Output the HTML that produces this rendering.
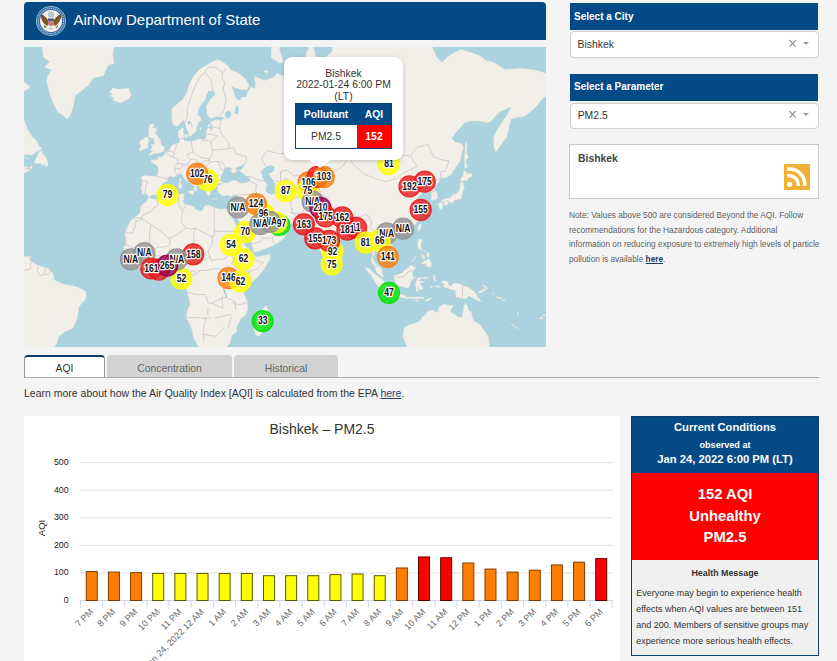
<!DOCTYPE html>
<html><head><meta charset="utf-8">
<style>
*{box-sizing:border-box;margin:0;padding:0}
html,body{width:837px;height:661px;overflow:hidden;background:#f4f4f4;font-family:"Liberation Sans",sans-serif;color:#333}
.a{position:absolute}
.t{position:absolute;white-space:nowrap;line-height:1}
.c{transform:translateX(-50%)}
.b{font-weight:bold}
</style></head><body>
<!-- header -->
<div class="a" style="left:24px;top:2px;width:522px;height:38px;background:#044a87;border-radius:4px 4px 0 0"></div>
<svg class="a" style="left:35px;top:5px" width="32" height="32" viewBox="0 0 32 32">
<circle cx="16" cy="16" r="15" fill="#8dbfc2"/>
<circle cx="16" cy="16" r="14.1" fill="#3b69a6"/>
<circle cx="16" cy="16" r="12.6" fill="none" stroke="#a9c3dc" stroke-width="1.2" stroke-dasharray="1.2 0.9"/>
<circle cx="16" cy="16" r="11" fill="#f6f3ec"/>
<circle cx="16" cy="9.5" r="3.2" fill="#b8c9d8"/>
<path d="M5.5 9.5 Q8 9 11 12.5 L14 16.5 L12.5 21 Q8 19 6.5 14 Z" fill="#7d5226"/>
<path d="M26.5 9.5 Q24 9 21 12.5 L18 16.5 L19.5 21 Q24 19 25.5 14 Z" fill="#7d5226"/>
<path d="M13 14.5 h6 v5 q-3 3.5 -6 0 Z" fill="#c87c7c"/>
<rect x="13" y="13.5" width="6" height="2.2" fill="#34589a"/>
<path d="M8.5 19.5 L12 22 L9.5 23 Z" fill="#5f7d3d"/>
<path d="M23.5 19.5 L20 22 L22.5 23 Z" fill="#9a8a6a"/>
<ellipse cx="16" cy="23.5" rx="2.5" ry="1.5" fill="#d8d0c0"/>
</svg>
<div class="t" style="left:73.5px;top:12.3px;font-size:15px;color:#fff">AirNow Department of State</div>

<!-- map -->
<div class="a" style="left:24px;top:47px;width:522px;height:300px;overflow:hidden;background:#aad3df">
<svg width="522" height="300" viewBox="0 0 522 300" style="position:absolute;left:0;top:0;display:block">
<rect width="522" height="300" fill="#aad3df"/>
<path d="M124.9,149.9L123.4,147.8L121.1,146.7L117.9,147.2L118.1,143.2L116.6,142.4L117.9,138.5L118.1,133.4L117.0,130.5L119.8,128.4L126.2,129.0L133.1,129.3L134.3,125.4L134.3,120.9L131.6,117.4L127.3,115.5L126.9,113.6L130.5,112.6L133.5,113.0L133.9,109.7L137.3,110.3L140.3,108.0L142.2,105.0L144.4,104.0L146.5,101.2L147.6,98.4L151.4,96.6L154.0,96.2L155.5,95.2L155.3,91.1L154.2,88.9L154.4,84.2L157.9,81.1L159.6,80.7L158.9,85.4L160.2,86.2L158.3,91.1L160.2,93.3L162.6,94.1L166.8,94.8L172.2,93.0L176.5,91.8L178.6,93.3L182.2,91.1L182.0,85.4L183.1,81.9L185.2,80.7L188.0,83.5L188.9,79.9L187.1,77.0L186.9,74.6L191.4,72.9L196.8,73.3L201.5,71.6L198.9,70.3L193.6,69.5L186.1,71.6L182.7,67.7L182.9,63.7L182.2,59.6L185.0,53.9L189.3,49.0L191.2,47.5L189.9,43.9L184.6,43.9L182.4,48.5L180.7,53.9L176.5,58.2L173.9,63.7L173.7,68.1L176.7,70.3L177.3,73.3L174.5,75.8L172.6,79.9L172.0,85.0L169.0,86.6L167.5,89.2L164.5,89.6L164.3,85.0L162.1,80.3L160.8,75.8L159.3,73.3L156.8,75.4L154.0,79.1L151.0,79.1L148.9,76.6L148.0,72.9L147.6,66.8L148.0,61.4L151.4,58.7L154.6,55.8L158.3,52.9L161.5,48.0L163.6,42.8L165.8,35.8L169.0,30.1L172.2,26.0L175.4,22.4L179.7,19.9L185.0,16.7L192.1,12.8L196.8,13.5L203.2,18.0L207.5,23.6L213.9,25.4L222.4,33.0L225.0,38.5L223.5,42.8L218.1,42.8L210.7,40.7L207.5,39.1L211.7,51.0L215.6,53.4L218.1,50.0L222.4,50.0L223.5,45.4L226.7,40.1L231.0,41.7L231.4,37.4L230.5,29.5L235.2,31.3L240.6,33.6L250.2,30.1L252.4,26.6L258.8,28.4L263.0,30.1L266.2,25.4L273.7,24.2L280.1,27.8L283.4,31.3L284.4,26.6L280.1,19.9L280.6,12.2L283.4,3.3L285.5,-1.8L289.8,1.1L291.9,10.2L290.8,16.7L294.0,24.8L293.0,31.9L296.2,34.7L301.5,30.7L305.8,31.9L301.5,10.2L307.9,4.7L309.7,-4.1L320.8,-7.9L322.9,-15.9L329.3,-24.4L350.7,-33.6L361.4,-43.5L380.6,-7.9L393.5,-4.1L407.4,-2.6L412.7,10.2L417.8,15.5L423.4,10.2L431.9,4.7L437.1,2.5L446.9,5.4L456.1,8.8L461.9,13.5L470.2,15.5L480.7,22.4L489.7,21.8L498.0,21.2L511.0,23.0L521.7,26.0L532.4,37.4L532.4,48.0L521.7,49.5L518.5,51.9L512.3,59.6L505.7,65.5L499.5,69.7L491.8,70.7L486.9,72.0L485.4,78.3L484.3,83.8L482.6,91.1L479.0,94.8L475.6,100.1L471.7,105.3L470.4,101.9L469.6,96.6L470.0,89.2L472.6,83.5L476.4,77.9L479.2,73.3L483.3,67.7L486.9,60.5L484.3,61.0L475.6,65.1L470.4,70.3L466.6,75.0L461.9,75.4L455.5,74.1L446.9,74.1L440.5,75.4L437.3,79.5L431.9,85.4L427.7,91.1L430.9,94.8L437.3,96.6L439.4,100.1L437.3,108.7L436.6,113.6L431.9,119.9L426.6,128.1L421.3,131.1L418.0,130.5L415.9,132.5L414.0,136.2L410.6,139.0L409.5,140.4L413.1,145.9L413.8,149.9L413.1,152.0L409.5,153.3L406.9,153.6L407.4,149.9L407.8,145.1L404.8,145.1L403.5,139.9L398.8,137.9L396.0,142.4L398.4,139.0L396.7,136.5L393.5,138.2L391.7,141.0L389.2,141.3L388.3,142.9L390.9,145.9L391.7,146.7L395.0,145.1L398.8,146.4L395.6,148.6L392.4,152.5L394.5,156.4L396.7,160.2L397.5,163.0L396.7,164.5L397.7,166.4L396.7,168.9L394.5,172.0L392.4,176.1L390.3,178.4L387.0,180.8L381.7,183.1L379.6,183.8L374.2,185.4L372.5,188.2L371.4,185.4L368.9,185.0L365.0,187.5L363.1,191.1L364.6,194.5L367.8,197.8L369.9,203.4L370.4,207.3L366.7,209.9L365.0,212.1L361.4,214.0L361.6,211.0L360.3,210.1L357.1,208.0L355.6,206.2L352.8,205.3L350.7,203.6L350.7,206.0L349.0,210.4L349.6,213.2L351.3,214.5L351.8,217.1L353.9,217.9L356.0,219.6L358.0,222.9L358.2,226.7L359.7,229.5L358.2,229.7L353.5,226.5L351.6,223.1L351.3,220.7L350.1,218.6L347.3,215.6L347.3,212.1L347.9,208.8L347.5,204.5L345.8,196.7L344.7,195.8L343.2,196.7L340.9,198.5L338.5,197.8L338.9,192.9L336.8,190.0L334.7,186.6L333.6,184.3L332.5,182.4L330.4,184.3L327.2,185.0L322.9,185.4L322.7,187.7L318.6,190.4L315.4,193.4L312.6,196.5L308.6,198.9L308.4,203.4L307.5,207.7L306.4,210.4L304.7,213.2L302.6,215.1L300.5,213.4L298.7,208.2L296.8,204.7L295.3,200.5L293.8,196.7L292.5,191.1L292.8,186.1L291.9,184.7L288.3,187.0L284.4,183.3L287.4,182.2L283.4,180.8L281.0,179.6L279.3,176.3L274.8,176.8L268.4,177.0L262.6,176.1L259.4,175.4L257.5,172.3L253.8,173.7L249.4,171.8L247.0,170.3L244.0,165.5L240.8,165.5L239.3,166.4L240.6,169.6L242.3,172.5L244.2,174.4L245.1,177.3L247.2,175.4L247.2,179.1L251.3,179.4L255.6,176.3L257.3,174.2L258.3,179.1L262.4,180.6L264.8,183.3L262.0,187.5L260.3,191.1L257.9,192.9L254.5,195.6L248.5,198.7L241.7,201.6L234.2,204.5L229.9,205.1L228.4,200.5L227.8,196.7L224.6,190.0L220.5,185.4L219.2,180.1L216.0,176.1L212.4,170.1L211.5,166.4L210.2,170.8L206.6,165.5L207.5,168.2L208.7,171.8L212.8,179.6L215.8,184.3L216.9,191.6L219.4,194.5L221.4,198.9L225.0,202.3L228.0,205.1L229.5,206.9L232.0,210.1L235.2,209.5L239.5,208.4L243.8,207.7L246.6,207.1L246.2,209.9L245.5,213.2L242.7,217.9L239.5,222.9L235.2,228.2L229.9,233.6L225.6,236.8L222.6,239.6L220.7,242.6L219.9,246.4L221.4,249.7L223.3,255.1L223.7,262.7L221.4,268.3L217.1,271.4L212.8,279.6L212.8,284.9L207.5,288.9L207.0,291.3L206.2,296.1L203.8,298.6L201.0,303.5L190.3,311.2L175.4,311.2L174.3,299.8L172.2,296.1L169.6,291.3L167.9,283.1L165.8,277.3L162.1,270.5L163.0,263.8L166.0,258.3L165.1,251.8L163.2,245.4L162.1,241.1L157.2,236.8L156.8,231.4L157.6,226.1L156.1,223.9L155.1,222.7L151.9,223.1L149.5,223.3L147.6,220.5L146.1,218.8L142.7,218.8L139.0,219.9L132.6,222.2L128.3,221.4L120.9,223.1L117.2,221.8L112.3,217.7L108.7,214.7L108.5,212.1L104.8,209.3L101.2,205.8L99.5,200.7L101.6,197.8L102.1,191.1L100.6,186.6L102.7,181.9L105.9,174.9L109.1,171.1L115.5,166.9L116.2,164.0L117.0,159.0L119.8,156.2L122.4,154.9L124.3,150.4L125.6,150.2L128.3,152.0L132.6,152.3L136.9,150.4L143.3,147.8L149.7,147.2L155.3,147.5L158.7,146.4L160.6,147.2L159.3,149.9L160.4,152.0L158.5,154.6L160.6,156.9L164.7,157.9L169.6,159.5L170.7,161.7L176.5,164.5L179.4,163.0L179.9,159.5L182.9,157.9L186.3,158.7L190.3,160.7L196.3,162.2L200.8,162.0L204.2,161.5L206.0,162.2L210.2,162.0L211.5,159.0L212.8,155.4L213.7,151.2L214.1,147.8L210.7,147.8L206.4,149.6L202.3,148.0L200.0,149.4L196.8,147.8L195.1,145.9L193.3,143.2L194.0,140.7L192.9,139.0L195.7,137.9L199.1,135.9L204.2,135.7L208.5,133.4L212.2,133.4L216.0,135.9L220.3,135.9L225.8,134.5L226.1,131.9L222.4,129.3L218.1,126.0L215.4,123.9L218.6,121.5L220.7,117.7L218.6,118.1L212.8,120.2L211.3,122.1L212.8,123.6L214.9,123.3L212.8,124.5L210.0,126.3L208.3,125.7L206.4,123.3L209.0,121.5L205.1,120.2L202.5,119.9L200.2,123.3L198.0,126.9L196.6,129.9L196.8,133.4L198.9,135.7L195.7,136.5L192.5,137.1L189.3,136.5L187.8,138.2L185.2,137.6L186.1,141.0L188.2,144.0L186.1,144.8L186.5,147.2L185.0,148.8L183.1,147.8L182.4,145.1L180.9,141.3L178.4,137.6L178.6,134.0L176.5,131.9L173.2,129.6L170.9,128.7L169.4,126.9L167.9,123.6L166.2,122.7L163.4,123.3L163.2,126.9L166.0,129.0L168.8,133.4L171.3,135.1L175.4,137.4L176.5,138.8L173.2,137.6L172.2,139.9L173.5,142.1L171.3,144.5L170.5,144.0L170.5,139.0L167.9,137.4L166.2,135.7L163.2,134.2L160.8,132.2L159.3,130.5L158.7,127.8L155.7,126.3L152.9,128.1L149.7,130.2L146.7,129.3L143.5,130.5L143.7,133.7L139.0,136.2L136.9,140.2L136.3,141.8L137.3,142.6L135.4,145.6L132.4,148.0L127.5,148.0ZM-1.0,109.0L5.0,111.7L3.9,112.0L-0.4,109.7ZM378.5,290.1L380.2,280.7L386.0,277.5L391.3,276.2L396.7,273.2L398.2,269.8L401.2,268.1L404.1,264.1L409.1,262.7L411.2,265.6L414.0,264.7L415.1,260.3L417.0,258.8L420.4,257.0L422.3,257.9L427.7,258.3L429.6,259.0L427.5,261.4L426.4,264.9L431.3,267.8L434.7,270.3L437.9,270.5L439.4,264.9L439.6,259.7L441.6,255.5L443.7,259.4L444.3,263.4L447.6,264.7L448.0,268.9L449.7,273.7L455.0,276.8L459.3,282.1L464.2,288.9L465.3,296.1L464.4,304.8L461.9,315.1L382.8,315.1L382.6,298.6L379.6,291.3ZM-55.5,-7.9L-34.1,-4.1L-23.4,3.3L-17.0,10.2L-8.5,18.0L-6.3,24.8L-5.3,30.1L1.1,35.8L5.8,39.6L3.3,42.8L-1.6,44.9L-3.8,49.0L-1.0,51.5L-1.6,55.3L0.1,58.2L-3.1,60.1L-9.6,61.0L-17.0,60.1L-29.9,60.1L-55.5,48.0ZM381.7,250.1L391.3,250.1L399.9,250.1L399.9,251.4L391.3,251.8L381.7,251.4ZM369.9,228.7L371.2,228.2L375.3,226.9L378.5,225.7L380.6,222.9L383.8,221.2L386.6,217.7L388.5,218.8L392.0,221.2L389.2,223.3L388.3,226.1L389.2,230.4L391.3,230.6L388.1,232.5L387.0,234.6L386.0,237.8L384.9,240.6L381.7,241.1L378.5,239.3L374.2,239.1L372.1,236.8L370.6,233.6ZM406.1,239.1L408.9,239.3L408.2,240.6L406.3,240.4ZM155.3,135.1L155.3,132.5L157.0,130.5L157.2,133.4L156.6,135.1ZM187.1,151.7L193.1,151.7L192.7,152.5L187.4,152.0ZM206.0,153.3L209.6,152.5L210.9,150.7L206.4,152.3ZM516.0,270.5L518.7,270.1L518.5,272.1L516.2,271.9ZM519.2,267.8L521.7,267.6L521.3,268.9L518.7,268.9ZM157.6,89.2L159.3,88.9L160.2,90.4L158.9,91.1L157.9,90.4ZM124.7,108.4L127.9,107.4L130.5,106.3L134.8,106.0L139.9,104.6L140.5,99.8L137.5,98.4L136.9,96.6L136.3,93.0L133.7,89.2L132.6,87.3L130.5,87.3L131.6,85.4L133.1,81.5L130.5,80.7L128.3,81.1L130.1,77.0L126.2,77.0L124.5,81.5L124.9,86.2L123.9,89.2L126.4,91.1L130.1,91.5L129.8,93.7L130.7,95.2L130.3,97.3L127.1,97.3L128.1,99.1L127.7,101.9L126.0,102.6L127.3,103.3L130.3,104.0L127.9,104.6ZM175.6,82.3L176.9,79.9L177.5,81.1L176.5,83.8ZM43.0,72.2L46.0,69.0L49.2,60.1L51.4,48.5L56.7,44.4L64.2,38.5L69.6,30.7L79.2,29.0L84.5,18.0L89.9,16.7L88.8,6.8L90.9,-4.1L94.1,-24.4L72.8,-65.9L8.6,-65.9L-4.2,-33.6L12.9,-20.1L17.2,-4.1L18.2,1.1L19.3,10.2L25.7,14.8L20.4,19.9L27.9,23.0L23.6,29.0L22.5,34.7L24.7,42.8L26.8,50.5L30.0,57.7L33.2,64.6L38.6,68.1ZM369.1,190.7L373.1,188.6L374.2,189.8L372.1,192.7L369.3,192.2ZM409.5,227.8L411.6,229.3L410.6,231.4L412.5,233.6L410.6,234.2L409.5,231.4ZM436.2,134.8L437.3,129.9L439.2,129.6L439.9,123.3L443.1,126.6L447.6,126.6L448.6,129.3L444.8,130.8L443.3,133.4L438.4,134.0ZM416.8,155.1L418.9,152.8L422.3,151.2L426.0,150.7L427.7,149.4L429.4,146.4L430.4,147.8L432.6,146.4L434.9,144.0L436.0,140.4L436.2,137.4L436.9,135.7L439.2,135.1L439.4,137.6L440.5,140.4L439.4,143.7L438.4,144.5L438.1,147.2L437.5,149.9L437.9,150.7L436.0,152.5L434.3,152.0L433.0,153.3L430.9,153.3L429.6,154.3L427.7,156.4L425.7,154.6L423.4,153.6L420.2,154.6ZM85.6,45.4L88.8,40.7L94.1,42.3L99.5,41.7L104.8,41.2L105.9,45.4L107.8,47.5L105.0,51.5L100.6,53.9L96.3,55.8L90.9,53.9L88.4,53.4L89.9,50.5L85.6,49.0L88.8,46.9ZM124.1,101.2L123.9,97.0L125.1,93.7L124.1,90.4L121.1,90.0L118.7,92.6L115.5,94.1L115.9,97.0L117.0,99.8L114.7,102.2L115.9,103.8L119.2,102.6L123.2,101.2ZM361.8,247.1L363.5,245.4L368.4,246.0L373.1,247.3L377.9,247.3L381.9,249.0L381.5,251.2L374.2,250.1L367.8,249.2L362.5,247.3ZM240.0,24.8L242.7,26.6L244.4,24.2L241.7,23.0ZM415.3,156.2L417.0,155.4L419.1,156.9L418.0,161.7L416.3,162.7L415.3,161.7L414.8,158.4L414.0,156.9ZM394.7,192.2L398.2,192.2L397.7,195.6L396.9,198.3L397.7,202.3L402.0,204.5L401.8,205.3L398.8,203.1L396.7,202.7L394.7,201.8L393.5,197.8L394.1,194.5ZM242.3,258.3L244.9,266.1L243.4,269.4L239.5,280.7L237.4,287.3L233.5,289.2L231.0,286.6L229.5,280.7L231.8,276.2L231.0,269.4L235.2,266.7L239.3,261.6ZM397.7,217.5L398.2,215.3L401.4,213.8L405.0,211.4L407.6,216.4L406.7,219.2L405.0,220.5L402.4,219.2L401.2,216.2ZM398.6,208.8L400.9,209.1L400.3,213.0L398.8,211.4ZM454.4,244.3L458.7,243.2L460.8,241.5L462.3,242.1L459.7,244.3L457.6,245.8L454.4,245.4ZM487.5,276.6L494.4,281.7L493.7,282.1L487.3,277.3ZM17.8,103.3L18.2,106.3L21.9,110.3L24.2,116.2L23.4,119.6L21.0,119.0L20.6,116.8L18.0,118.7L16.7,116.5L10.1,116.5L12.0,111.7L14.2,106.3ZM417.0,235.3L419.1,233.4L423.4,234.4L425.5,239.6L430.9,235.7L437.3,237.6L444.8,240.6L448.6,243.2L452.3,246.4L453.3,250.1L457.6,254.6L455.0,254.6L450.1,251.4L444.8,249.0L443.3,251.0L438.4,252.0L434.1,249.9L431.9,250.3L431.5,243.6L425.5,241.9L422.5,240.8L420.8,241.1L419.1,238.5L421.3,237.4L417.6,235.7ZM458.7,237.8L461.9,239.3L464.0,242.1L463.2,242.6L460.8,240.2L458.2,238.5ZM-55.5,108.7L-27.7,61.0L-17.0,64.6L-11.7,74.6L-6.3,77.9L-3.1,73.3L-0.8,69.5L1.1,75.4L3.3,81.5L5.8,85.4L8.6,90.0L12.9,94.1L14.6,98.4L17.8,101.2L15.2,103.6L11.8,105.3L8.6,108.0L2.2,107.7L-5.3,108.4L-5.3,111.3L-0.4,112.6L-3.1,115.2L-1.6,116.8L-1.2,120.6L0.5,121.2L3.3,122.4L5.8,122.7L8.2,120.9L7.6,118.4L5.4,120.6L6.3,123.6L1.1,125.7L-3.1,129.0L-4.6,126.6L-1.0,123.6L-4.2,123.9L-6.8,125.4L-12.8,129.0L-12.8,139.0L-76.9,139.0ZM247.0,10.2L255.6,16.1L259.8,15.5L255.6,3.3L256.6,-7.9L265.2,-24.4L248.1,-24.4ZM387.5,214.7L392.6,208.0L393.0,208.8L388.3,214.9ZM397.7,207.1L400.1,208.0L399.4,209.9L397.5,209.7ZM-0.8,119.6L4.3,119.9L3.3,121.5L0.1,120.9ZM183.5,78.3L185.2,77.0L186.7,77.4L185.6,79.7L183.9,79.5ZM440.3,121.5L440.9,119.0L440.3,113.6L440.9,105.3L441.6,96.6L442.6,94.1L443.1,98.4L442.6,105.3L444.8,111.3L443.1,111.0L441.6,115.2L443.5,119.9L440.9,121.5ZM402.4,205.6L405.9,206.2L405.4,208.8L403.9,211.0L402.7,208.2ZM154.9,141.8L154.4,136.5L156.6,135.7L157.9,137.6L157.4,141.5L156.1,141.8ZM410.6,238.7L416.6,239.1L415.9,240.4L411.0,240.0ZM419.1,155.6L422.3,154.3L424.7,154.6L423.8,157.2L421.3,158.4L420.2,157.2ZM163.4,145.1L165.5,144.0L170.3,143.7L169.2,146.4L169.2,148.0L167.5,147.2L163.8,145.6ZM468.3,245.4L470.4,247.3L469.4,247.5L467.9,246.0ZM472.6,249.7L477.9,250.7L476.8,251.8L472.6,250.7ZM477.9,252.5L480.7,253.6L480.0,254.0L478.1,253.6ZM480.0,250.7L482.2,252.9L481.5,253.3L479.8,251.4ZM-12.8,206.7L0.1,209.5L4.3,209.5L4.8,210.6L6.9,214.3L10.8,216.4L12.9,217.9L19.3,219.9L24.7,221.8L27.9,225.0L30.0,229.3L30.0,232.5L33.2,234.6L41.8,237.8L49.2,238.7L54.6,240.4L61.6,244.1L62.5,248.6L61.0,252.9L57.8,256.2L54.6,260.5L53.5,270.5L51.4,276.2L49.2,280.7L45.0,283.1L40.7,284.7L34.3,290.1L33.0,296.1L30.0,301.0L23.6,309.9L-12.8,309.9ZM307.7,211.4L310.1,214.3L312.0,216.4L311.4,218.8L309.2,219.9L307.9,217.7L307.5,214.9ZM392.4,244.3L392.2,240.0L390.9,238.5L393.0,232.5L393.9,230.6L402.0,230.4L404.6,229.3L403.1,231.6L396.7,231.4L394.7,233.8L400.7,234.4L396.2,236.3L399.4,242.1L395.6,242.8L394.3,238.5L394.3,244.5ZM340.7,220.5L345.4,221.4L347.9,224.4L351.8,227.8L353.9,228.9L358.2,232.5L360.1,235.1L363.5,238.9L363.1,244.9L360.5,245.1L355.6,241.1L352.8,237.8L350.1,233.6L347.7,228.9L344.3,225.2ZM391.3,252.9L395.2,253.8L393.5,254.6L391.3,253.6ZM395.6,177.3L397.7,177.3L397.5,179.6L395.6,183.1L395.2,184.5L393.9,182.9L393.7,180.8ZM402.0,252.5L409.1,250.3L404.1,254.0L400.9,254.6ZM4.6,209.3L6.5,209.3L6.5,210.8L4.6,210.8ZM493.1,264.9L494.6,266.1L493.9,268.3L493.1,267.2ZM262.0,19.3L266.2,21.2L265.8,16.7L262.6,17.4ZM160.4,88.5L163.0,86.9L163.8,88.9L162.8,91.1L160.8,90.4Z" fill="#f2efe9" stroke="#e4ddd0" stroke-width="0.4"/>
<path d="M238.5,122.7L241.7,120.2L245.9,118.4L250.2,119.3L250.6,123.6L246.6,126.0L244.4,126.6L246.6,129.9L249.6,133.4L250.0,135.7L252.4,136.8L250.2,139.0L251.3,141.0L252.1,146.4L247.0,147.8L243.8,146.2L241.7,143.7L242.5,138.5L244.4,137.9L242.7,137.4L240.8,134.0L238.5,130.5L238.5,127.5L236.7,125.7ZM200.6,67.7L202.3,65.1L204.2,63.3L207.0,65.5L207.2,68.6L204.9,71.4L202.1,70.7ZM210.2,65.9L211.9,60.1L213.4,58.2L214.9,61.9L213.9,66.8L212.4,67.3ZM163.4,75.8L164.7,73.7L167.3,74.6L165.8,77.0L164.1,77.4ZM167.0,76.2L167.9,75.8L168.8,79.9L167.7,80.3ZM204.9,234.6L207.5,232.7L209.8,233.4L209.6,236.3L207.2,238.1L204.7,236.8ZM199.3,239.8L200.2,239.6L203.2,249.7L202.3,251.0L200.8,247.5L199.5,243.2ZM210.2,253.1L210.9,252.9L212.2,260.5L212.4,263.6L211.5,263.4L210.7,257.3ZM294.0,119.9L295.8,118.7L299.4,119.9L303.7,119.0L306.2,120.2L304.7,120.6L300.5,121.8L296.2,121.5ZM358.8,103.3L360.5,103.6L365.2,99.8L368.2,96.6L371.0,89.2L370.6,88.1L368.4,92.6L364.6,97.7L361.4,101.9Z" fill="#aad3df"/>
<path d="M133.1,152.3L133.3,155.1L134.3,158.7L129.2,161.2L129.0,163.0L125.1,165.5L118.3,168.4M118.3,170.8L108.7,170.8M118.3,168.4L118.3,171.8L126.6,177.3M118.3,171.8L111.2,174.9L111.2,180.8L109.1,181.9L109.1,185.9L100.6,185.9M126.6,177.3L125.1,196.7L112.3,198.9L110.8,200.7L101.6,197.4M126.6,177.3L139.5,186.6L143.7,190.9L146.1,190.9L149.3,190.0L162.6,180.8M162.6,180.8L158.7,177.7L157.0,174.4L158.1,171.3L157.9,166.7L158.7,164.7L161.5,157.4M158.7,164.7L156.1,160.0L154.6,157.7L154.6,153.6L154.9,147.5M162.6,180.8L166.8,182.2L170.9,181.0L188.2,190.0L188.2,188.8L190.3,188.8L190.3,184.3L215.8,184.3M190.3,161.2L190.3,184.3M146.1,190.9L145.9,196.9L144.6,199.2L137.3,200.3L135.8,199.8L132.6,200.9L130.1,203.8L127.5,205.6L125.6,208.6L125.1,210.1M170.9,181.0L170.0,187.0L169.4,196.1L166.0,202.7L167.3,204.2M144.6,207.3L145.7,203.4L151.4,204.2L157.9,204.9L163.0,203.8L166.0,202.9L167.3,204.2M188.2,190.0L188.2,198.5L185.0,202.0L183.9,205.3L185.6,208.2L187.1,213.8M167.3,204.2L168.8,207.7L170.0,211.0L167.5,211.2L170.3,216.2L176.7,215.3L181.8,212.5L185.9,209.1M187.1,213.8L192.5,212.1L195.7,213.0L201.0,211.4L206.4,206.4L209.6,212.1M219.4,193.6L214.9,201.6L211.9,207.1L210.0,209.7L209.6,212.1L209.6,215.3L207.5,215.8L213.7,222.7M228.8,208.8L231.0,213.2L239.3,215.3L233.1,221.8L226.7,223.9L224.6,224.2L224.6,236.1M213.7,222.7L224.6,224.2M209.6,223.5L211.7,229.3L209.6,234.6L220.7,242.6M223.3,255.1L217.1,257.5L211.7,257.0M167.9,223.5L172.2,225.4L176.7,223.3L181.8,223.5L190.3,221.8L195.7,221.8L203.2,224.6L201.0,229.3L200.8,235.7L199.8,242.1L202.1,250.3L197.8,250.7L198.9,261.2L188.2,256.2L183.9,255.9L181.8,247.5L172.2,247.5L163.2,245.4M162.1,270.1L179.7,271.2L186.9,270.7M156.1,222.7L162.1,217.1L166.0,210.6L167.3,204.2M142.7,218.8L144.6,207.3M139.5,219.4L136.9,208.8L130.9,208.8M130.3,221.6L130.9,212.1L130.9,208.8M120.9,223.1L118.7,216.4L114.5,214.7L112.7,217.7M125.1,210.1L119.8,210.6L119.2,216.2L120.9,223.1M112.3,198.9L112.5,205.8L107.6,205.3L104.8,209.3M179.7,271.6L181.8,271.6L179.7,280.7L179.7,287.3L179.7,295.9M179.7,287.3L191.4,289.2L199.8,281.2M207.5,269.4L203.8,281.7M191.0,271.2L207.5,267.2M183.9,260.5L183.9,268.3M188.2,256.2L198.5,250.7M202.1,250.3L207.5,252.9L210.7,257.3M166.0,227.8L161.1,227.8L157.9,227.6M167.9,223.5L166.0,227.8L171.5,227.8L176.7,223.3M133.1,129.3L143.7,132.2M117.9,133.7L123.6,134.5L122.1,139.0L121.5,142.4L121.1,146.7M142.2,105.0L145.9,109.0L149.5,110.3L154.4,112.0L153.1,116.5L149.7,121.2L151.9,121.8L151.0,124.2L152.9,128.1M149.5,110.3L149.9,106.0L151.9,101.2L152.3,97.3M144.2,104.3L149.5,105.0M155.3,91.5L158.1,91.8M167.3,95.2L168.1,99.8L169.0,105.0L162.8,107.7L166.4,112.6L164.7,116.8L157.2,116.8L153.1,116.5M157.2,116.8L159.3,119.0L156.1,121.8L151.9,121.8M159.3,119.0L163.4,118.4L166.2,119.9L172.2,119.9L173.5,115.2L173.0,113.3L169.0,112.0L166.4,112.6M166.2,119.9L166.2,122.7M178.6,93.3L185.6,93.3L187.1,95.2L188.0,101.9L188.4,107.0L185.2,111.7L177.5,110.7L172.2,107.4L169.0,105.0M173.5,115.2L177.1,115.8L180.7,113.6L184.4,113.9L185.2,111.7M181.8,86.9L193.8,88.5M188.9,79.9L195.5,81.5M196.8,73.3L195.5,81.5L197.2,86.6M193.8,88.5L187.1,95.2M197.2,86.6L204.7,95.5L204.9,101.5M188.0,103.3L204.9,101.5M204.9,101.5L209.6,100.8L212.8,107.0L218.6,108.7L222.4,110.0L222.0,115.8L218.6,118.1M185.2,111.7L185.9,115.2L193.8,114.2L199.1,115.8L201.0,120.2L200.4,123.3M193.8,114.2L197.2,123.0L200.4,123.3M185.9,115.2L181.8,120.9L185.2,126.0L190.3,128.4L196.8,128.1M172.2,119.9L177.5,121.8L181.8,120.9M185.9,135.4L193.1,134.2L196.8,133.4M193.1,134.2L192.7,137.1M179.7,139.9L180.9,136.2L185.9,135.4L185.2,126.0M170.7,123.9L177.5,124.5L178.4,129.6L179.9,132.5L180.9,136.2M177.5,121.8L177.5,124.5M160.8,75.8L163.6,69.0L163.0,62.3L166.8,50.5L170.0,41.7L176.5,29.0L180.7,26.0M180.7,26.0L187.1,32.4L188.6,43.9M180.7,26.0L183.9,19.9L192.5,20.5L198.7,26.0M198.7,26.0L197.8,31.9L201.0,34.7L199.1,42.3L202.3,51.9L200.2,62.3L196.3,69.0M201.5,21.8L198.7,26.0M242.1,120.2L240.6,117.1L237.4,111.3L243.8,103.6L254.5,106.7L267.3,106.0L268.4,101.9L266.9,96.6L275.9,92.6L284.4,89.6L294.0,94.8L301.1,93.3L303.7,100.1L307.9,106.0L315.4,105.3L323.5,111.7M323.5,111.7L319.7,118.1L313.3,123.0L308.4,124.8L308.4,130.8L299.4,137.6L294.3,140.4L297.0,146.2M256.6,124.5L262.0,123.0L267.3,126.3L269.5,129.0L275.7,128.4L278.0,130.8L283.4,137.4L284.4,135.1L288.7,132.5L295.1,129.9L308.4,130.8M250.2,133.4L256.6,135.4L262.2,131.4L265.2,133.7L267.7,135.7L270.3,139.0L274.8,142.1L279.1,146.2M256.6,135.4L256.6,124.5M252.1,146.4L255.6,144.5L258.8,144.0L263.0,146.4L266.2,148.6L267.7,151.0L270.5,151.7L274.8,149.1L279.1,146.2L283.4,146.7L287.6,143.5L289.8,147.8L297.0,146.2M267.7,151.0L267.1,154.3L266.5,157.7L267.1,161.5L268.8,161.7L267.1,165.5L273.7,166.7L278.6,165.5L280.1,162.0L285.1,160.5L288.7,154.9L289.8,149.6L296.2,147.2M267.1,165.5L270.5,166.7L272.2,172.0L268.6,176.8M239.5,164.0L238.9,162.7L238.9,160.2L235.2,157.7L234.0,155.1L234.6,151.2L232.7,146.7L231.6,143.7L231.8,140.7M239.3,166.4L236.3,167.4L232.5,167.2L226.7,162.5L220.3,159.5L224.6,154.1L227.3,147.0L232.7,146.7M215.4,147.8L219.9,148.0L227.3,147.0M213.7,158.4L220.3,159.5L216.0,161.5L218.1,164.0L215.8,167.2L211.6,166.8M228.4,196.9L236.3,194.9L238.7,191.1L248.1,191.1L255.8,184.3L255.1,182.6L248.1,179.9L247.2,179.1M248.1,191.1L250.4,196.5M225.8,134.5L229.9,135.9L232.7,138.2L231.8,140.7M222.4,129.3L227.8,129.9L231.0,131.4L236.3,133.7L240.8,134.0M296.2,147.0L303.7,151.2L306.4,159.0L310.1,164.7L319.7,169.4L325.3,170.3L328.5,169.6L333.6,170.6L341.1,167.2L345.4,169.4L347.7,177.3L345.8,179.9L349.6,184.0L353.9,186.1L355.2,183.3L362.0,181.5L365.0,182.4L367.8,185.4M282.7,180.3L288.7,178.7L286.6,171.3L291.9,165.5L294.0,165.2L296.2,160.5L296.0,153.8L303.2,151.2M308.2,164.7L308.4,167.9L316.5,171.8L325.3,173.9L325.3,170.3M325.3,173.9L327.2,176.8L326.8,184.3M334.7,186.1L334.5,177.5L332.5,177.0L328.9,174.2M334.9,186.1L336.6,179.6L339.6,175.8L344.7,170.6M353.1,185.2L350.9,187.9L347.5,189.5L346.0,192.5L347.7,197.8L349.0,203.4L347.7,211.0M350.9,187.9L353.3,194.5L359.3,194.0L362.7,198.7L356.9,201.8L355.8,205.3M355.2,183.3L359.3,187.5L361.8,192.2L366.9,199.4L363.5,201.4L362.7,198.7M366.7,200.9L363.5,206.7L361.2,210.1M350.9,218.8L355.0,219.2M371.2,228.4L374.2,230.4L380.6,229.3L383.8,225.0L388.3,223.5M438.4,238.1L438.4,252.0M324.6,111.3L333.6,106.7L346.4,101.9L355.0,107.0L365.7,108.0L368.9,110.3L380.6,108.0L386.4,109.0M324.6,111.3L330.4,118.4L340.0,126.9L350.7,131.6L361.4,134.5L372.1,131.6L375.9,128.4L381.7,124.8L392.8,119.3L386.4,109.0M386.4,109.0L393.5,99.8L404.1,97.7L409.5,109.4L415.9,112.3L424.9,114.2L421.3,124.2L417.0,124.8L416.1,131.9M402.7,139.0L406.3,135.1L410.6,133.4L414.2,132.2L416.1,131.9M407.8,145.1L411.4,142.9M7.6,214.3L6.1,218.6L7.1,221.4L0.1,223.5M14.4,219.6L12.9,223.9L16.1,228.4L20.4,227.6M21.4,220.3L20.4,227.6M26.6,223.5L24.7,227.6L20.4,227.6" fill="none" stroke="#c9bcc4" stroke-width="0.7"/>
</svg><svg class="a" style="left:0;top:0" width="522" height="300" viewBox="0 0 522 300"><circle cx="157.4" cy="231.7" r="10.5" fill="#ffff00" fill-opacity="0.8" stroke="#ffff00" stroke-opacity="0.9" stroke-width="1.2"/><circle cx="106.9" cy="212.4" r="10.5" fill="#949494" fill-opacity="0.8" stroke="#949494" stroke-opacity="0.9" stroke-width="1.2"/><circle cx="120.3" cy="206.2" r="10.5" fill="#949494" fill-opacity="0.8" stroke="#949494" stroke-opacity="0.9" stroke-width="1.2"/><circle cx="169.3" cy="207.3" r="10.5" fill="#ea1a1a" fill-opacity="0.8" stroke="#ea1a1a" stroke-opacity="0.9" stroke-width="1.2"/><circle cx="152.9" cy="212.4" r="10.5" fill="#949494" fill-opacity="0.8" stroke="#949494" stroke-opacity="0.9" stroke-width="1.2"/><circle cx="127.3" cy="221.5" r="10.5" fill="#ea1a1a" fill-opacity="0.8" stroke="#ea1a1a" stroke-opacity="0.9" stroke-width="1.2"/><circle cx="134.7" cy="222.6" r="10.5" fill="#ea1a1a" fill-opacity="0.8" stroke="#ea1a1a" stroke-opacity="0.9" stroke-width="1.2"/><circle cx="143.2" cy="218.6" r="10.5" fill="#99004c" fill-opacity="0.8" stroke="#99004c" stroke-opacity="0.9" stroke-width="1.2"/><circle cx="143.6" cy="148.0" r="10.5" fill="#ffff00" fill-opacity="0.8" stroke="#ffff00" stroke-opacity="0.9" stroke-width="1.2"/><circle cx="183.7" cy="133.1" r="10.5" fill="#ffff00" fill-opacity="0.8" stroke="#ffff00" stroke-opacity="0.9" stroke-width="1.2"/><circle cx="173.2" cy="126.8" r="10.5" fill="#f77f10" fill-opacity="0.8" stroke="#f77f10" stroke-opacity="0.9" stroke-width="1.2"/><circle cx="221.2" cy="185.1" r="10.5" fill="#ffff00" fill-opacity="0.8" stroke="#ffff00" stroke-opacity="0.9" stroke-width="1.2"/><circle cx="214.0" cy="160.5" r="10.5" fill="#949494" fill-opacity="0.8" stroke="#949494" stroke-opacity="0.9" stroke-width="1.2"/><circle cx="239.5" cy="166.8" r="10.5" fill="#ffff00" fill-opacity="0.8" stroke="#ffff00" stroke-opacity="0.9" stroke-width="1.2"/><circle cx="232.0" cy="157.0" r="10.5" fill="#f77f10" fill-opacity="0.8" stroke="#f77f10" stroke-opacity="0.9" stroke-width="1.2"/><circle cx="255.3" cy="178.0" r="10.5" fill="#00e400" fill-opacity="0.8" stroke="#00e400" stroke-opacity="0.9" stroke-width="1.2"/><circle cx="252.5" cy="175.5" r="10.5" fill="#ffff00" fill-opacity="0.8" stroke="#ffff00" stroke-opacity="0.9" stroke-width="1.2"/><circle cx="245.8" cy="174.8" r="10.5" fill="#949494" fill-opacity="0.8" stroke="#949494" stroke-opacity="0.9" stroke-width="1.2"/><circle cx="236.3" cy="177.2" r="10.5" fill="#949494" fill-opacity="0.8" stroke="#949494" stroke-opacity="0.9" stroke-width="1.2"/><circle cx="206.9" cy="197.8" r="10.5" fill="#ffff00" fill-opacity="0.8" stroke="#ffff00" stroke-opacity="0.9" stroke-width="1.2"/><circle cx="219.6" cy="212.1" r="10.5" fill="#ffff00" fill-opacity="0.8" stroke="#ffff00" stroke-opacity="0.9" stroke-width="1.2"/><circle cx="204.5" cy="231.2" r="10.5" fill="#f77f10" fill-opacity="0.8" stroke="#f77f10" stroke-opacity="0.9" stroke-width="1.2"/><circle cx="216.4" cy="234.4" r="10.5" fill="#ffff00" fill-opacity="0.8" stroke="#ffff00" stroke-opacity="0.9" stroke-width="1.2"/><circle cx="238.7" cy="274.1" r="10.5" fill="#00e400" fill-opacity="0.8" stroke="#00e400" stroke-opacity="0.9" stroke-width="1.2"/><circle cx="261.8" cy="144.2" r="10.5" fill="#ffff00" fill-opacity="0.8" stroke="#ffff00" stroke-opacity="0.9" stroke-width="1.2"/><circle cx="284.5" cy="135.4" r="10.5" fill="#f77f10" fill-opacity="0.8" stroke="#f77f10" stroke-opacity="0.9" stroke-width="1.2"/><circle cx="283.4" cy="143.4" r="10.5" fill="#ffff00" fill-opacity="0.8" stroke="#ffff00" stroke-opacity="0.9" stroke-width="1.2"/><circle cx="293.5" cy="129.8" r="10.5" fill="#ea1a1a" fill-opacity="0.8" stroke="#ea1a1a" stroke-opacity="0.9" stroke-width="1.2"/><circle cx="299.8" cy="130.2" r="10.5" fill="#f77f10" fill-opacity="0.8" stroke="#f77f10" stroke-opacity="0.9" stroke-width="1.2"/><circle cx="288.6" cy="154.7" r="10.5" fill="#949494" fill-opacity="0.8" stroke="#949494" stroke-opacity="0.9" stroke-width="1.2"/><circle cx="296.4" cy="160.8" r="10.5" fill="#99004c" fill-opacity="0.8" stroke="#99004c" stroke-opacity="0.9" stroke-width="1.2"/><circle cx="301.7" cy="169.5" r="10.5" fill="#ea1a1a" fill-opacity="0.8" stroke="#ea1a1a" stroke-opacity="0.9" stroke-width="1.2"/><circle cx="279.9" cy="177.3" r="10.5" fill="#ea1a1a" fill-opacity="0.8" stroke="#ea1a1a" stroke-opacity="0.9" stroke-width="1.2"/><circle cx="318.2" cy="170.4" r="10.5" fill="#ea1a1a" fill-opacity="0.8" stroke="#ea1a1a" stroke-opacity="0.9" stroke-width="1.2"/><circle cx="332.1" cy="180.8" r="10.5" fill="#ea1a1a" fill-opacity="0.8" stroke="#ea1a1a" stroke-opacity="0.9" stroke-width="1.2"/><circle cx="323.4" cy="182.6" r="10.5" fill="#ea1a1a" fill-opacity="0.8" stroke="#ea1a1a" stroke-opacity="0.9" stroke-width="1.2"/><circle cx="307.7" cy="217.3" r="10.5" fill="#ffff00" fill-opacity="0.8" stroke="#ffff00" stroke-opacity="0.9" stroke-width="1.2"/><circle cx="308.6" cy="204.3" r="10.5" fill="#ffff00" fill-opacity="0.8" stroke="#ffff00" stroke-opacity="0.9" stroke-width="1.2"/><circle cx="291.2" cy="191.3" r="10.5" fill="#ea1a1a" fill-opacity="0.8" stroke="#ea1a1a" stroke-opacity="0.9" stroke-width="1.2"/><circle cx="305.1" cy="193.9" r="10.5" fill="#ea1a1a" fill-opacity="0.8" stroke="#ea1a1a" stroke-opacity="0.9" stroke-width="1.2"/><circle cx="365.0" cy="117.1" r="10.5" fill="#ffff00" fill-opacity="0.8" stroke="#ffff00" stroke-opacity="0.9" stroke-width="1.2"/><circle cx="385.5" cy="139.4" r="10.5" fill="#ea1a1a" fill-opacity="0.8" stroke="#ea1a1a" stroke-opacity="0.9" stroke-width="1.2"/><circle cx="400.7" cy="134.7" r="10.5" fill="#ea1a1a" fill-opacity="0.8" stroke="#ea1a1a" stroke-opacity="0.9" stroke-width="1.2"/><circle cx="396.7" cy="162.9" r="10.5" fill="#ea1a1a" fill-opacity="0.8" stroke="#ea1a1a" stroke-opacity="0.9" stroke-width="1.2"/><circle cx="379.1" cy="181.7" r="10.5" fill="#949494" fill-opacity="0.8" stroke="#949494" stroke-opacity="0.9" stroke-width="1.2"/><circle cx="362.7" cy="186.4" r="10.5" fill="#949494" fill-opacity="0.8" stroke="#949494" stroke-opacity="0.9" stroke-width="1.2"/><circle cx="341.6" cy="195.7" r="10.5" fill="#ffff00" fill-opacity="0.8" stroke="#ffff00" stroke-opacity="0.9" stroke-width="1.2"/><circle cx="355.7" cy="193.4" r="10.5" fill="#ffff00" fill-opacity="0.8" stroke="#ffff00" stroke-opacity="0.9" stroke-width="1.2"/><circle cx="363.9" cy="209.8" r="10.5" fill="#f77f10" fill-opacity="0.8" stroke="#f77f10" stroke-opacity="0.9" stroke-width="1.2"/><circle cx="365.0" cy="245.8" r="10.5" fill="#00e400" fill-opacity="0.8" stroke="#00e400" stroke-opacity="0.9" stroke-width="1.2"/><text transform="translate(157.4,234.9) scale(0.86,1)" text-anchor="middle" font-family="Liberation Sans" font-weight="bold" font-size="10" fill="#111" stroke="#fff" stroke-width="2.4" stroke-linejoin="round" paint-order="stroke">52</text><text transform="translate(106.9,215.6) scale(0.86,1)" text-anchor="middle" font-family="Liberation Sans" font-weight="bold" font-size="10" fill="#111" stroke="#fff" stroke-width="2.4" stroke-linejoin="round" paint-order="stroke">N/A</text><text transform="translate(120.3,209.4) scale(0.86,1)" text-anchor="middle" font-family="Liberation Sans" font-weight="bold" font-size="10" fill="#111" stroke="#fff" stroke-width="2.4" stroke-linejoin="round" paint-order="stroke">N/A</text><text transform="translate(169.3,210.5) scale(0.86,1)" text-anchor="middle" font-family="Liberation Sans" font-weight="bold" font-size="10" fill="#111" stroke="#fff" stroke-width="2.4" stroke-linejoin="round" paint-order="stroke">158</text><text transform="translate(152.9,215.6) scale(0.86,1)" text-anchor="middle" font-family="Liberation Sans" font-weight="bold" font-size="10" fill="#111" stroke="#fff" stroke-width="2.4" stroke-linejoin="round" paint-order="stroke">N/A</text><text transform="translate(127.3,224.7) scale(0.86,1)" text-anchor="middle" font-family="Liberation Sans" font-weight="bold" font-size="10" fill="#111" stroke="#fff" stroke-width="2.4" stroke-linejoin="round" paint-order="stroke">161</text><text transform="translate(143.2,221.8) scale(0.86,1)" text-anchor="middle" font-family="Liberation Sans" font-weight="bold" font-size="10" fill="#111" stroke="#fff" stroke-width="2.4" stroke-linejoin="round" paint-order="stroke">265</text><text transform="translate(143.6,151.2) scale(0.86,1)" text-anchor="middle" font-family="Liberation Sans" font-weight="bold" font-size="10" fill="#111" stroke="#fff" stroke-width="2.4" stroke-linejoin="round" paint-order="stroke">79</text><text transform="translate(183.7,136.3) scale(0.86,1)" text-anchor="middle" font-family="Liberation Sans" font-weight="bold" font-size="10" fill="#111" stroke="#fff" stroke-width="2.4" stroke-linejoin="round" paint-order="stroke">76</text><text transform="translate(173.2,130.0) scale(0.86,1)" text-anchor="middle" font-family="Liberation Sans" font-weight="bold" font-size="10" fill="#111" stroke="#fff" stroke-width="2.4" stroke-linejoin="round" paint-order="stroke">102</text><text transform="translate(221.2,188.3) scale(0.86,1)" text-anchor="middle" font-family="Liberation Sans" font-weight="bold" font-size="10" fill="#111" stroke="#fff" stroke-width="2.4" stroke-linejoin="round" paint-order="stroke">70</text><text transform="translate(214.0,163.7) scale(0.86,1)" text-anchor="middle" font-family="Liberation Sans" font-weight="bold" font-size="10" fill="#111" stroke="#fff" stroke-width="2.4" stroke-linejoin="round" paint-order="stroke">N/A</text><text transform="translate(239.5,170.0) scale(0.86,1)" text-anchor="middle" font-family="Liberation Sans" font-weight="bold" font-size="10" fill="#111" stroke="#fff" stroke-width="2.4" stroke-linejoin="round" paint-order="stroke">96</text><text transform="translate(232.0,160.2) scale(0.86,1)" text-anchor="middle" font-family="Liberation Sans" font-weight="bold" font-size="10" fill="#111" stroke="#fff" stroke-width="2.4" stroke-linejoin="round" paint-order="stroke">124</text><text transform="translate(245.8,178.0) scale(0.86,1)" text-anchor="middle" font-family="Liberation Sans" font-weight="bold" font-size="10" fill="#111" stroke="#fff" stroke-width="2.4" stroke-linejoin="round" paint-order="stroke">N/A</text><text transform="translate(236.3,180.4) scale(0.86,1)" text-anchor="middle" font-family="Liberation Sans" font-weight="bold" font-size="10" fill="#111" stroke="#fff" stroke-width="2.4" stroke-linejoin="round" paint-order="stroke">N/A</text><text transform="translate(257.5,180.0) scale(0.86,1)" text-anchor="middle" font-family="Liberation Sans" font-weight="bold" font-size="10" fill="#111" stroke="#fff" stroke-width="2.4" stroke-linejoin="round" paint-order="stroke">97</text><text transform="translate(206.9,201.0) scale(0.86,1)" text-anchor="middle" font-family="Liberation Sans" font-weight="bold" font-size="10" fill="#111" stroke="#fff" stroke-width="2.4" stroke-linejoin="round" paint-order="stroke">54</text><text transform="translate(219.6,215.3) scale(0.86,1)" text-anchor="middle" font-family="Liberation Sans" font-weight="bold" font-size="10" fill="#111" stroke="#fff" stroke-width="2.4" stroke-linejoin="round" paint-order="stroke">62</text><text transform="translate(204.5,234.4) scale(0.86,1)" text-anchor="middle" font-family="Liberation Sans" font-weight="bold" font-size="10" fill="#111" stroke="#fff" stroke-width="2.4" stroke-linejoin="round" paint-order="stroke">146</text><text transform="translate(216.4,237.6) scale(0.86,1)" text-anchor="middle" font-family="Liberation Sans" font-weight="bold" font-size="10" fill="#111" stroke="#fff" stroke-width="2.4" stroke-linejoin="round" paint-order="stroke">62</text><text transform="translate(238.7,277.3) scale(0.86,1)" text-anchor="middle" font-family="Liberation Sans" font-weight="bold" font-size="10" fill="#111" stroke="#fff" stroke-width="2.4" stroke-linejoin="round" paint-order="stroke">33</text><text transform="translate(261.8,147.4) scale(0.86,1)" text-anchor="middle" font-family="Liberation Sans" font-weight="bold" font-size="10" fill="#111" stroke="#fff" stroke-width="2.4" stroke-linejoin="round" paint-order="stroke">87</text><text transform="translate(284.5,138.6) scale(0.86,1)" text-anchor="middle" font-family="Liberation Sans" font-weight="bold" font-size="10" fill="#111" stroke="#fff" stroke-width="2.4" stroke-linejoin="round" paint-order="stroke">106</text><text transform="translate(283.4,146.6) scale(0.86,1)" text-anchor="middle" font-family="Liberation Sans" font-weight="bold" font-size="10" fill="#111" stroke="#fff" stroke-width="2.4" stroke-linejoin="round" paint-order="stroke">75</text><text transform="translate(293.5,133.0) scale(0.86,1)" text-anchor="middle" font-family="Liberation Sans" font-weight="bold" font-size="10" fill="#111" stroke="#fff" stroke-width="2.4" stroke-linejoin="round" paint-order="stroke">1</text><text transform="translate(299.8,133.4) scale(0.86,1)" text-anchor="middle" font-family="Liberation Sans" font-weight="bold" font-size="10" fill="#111" stroke="#fff" stroke-width="2.4" stroke-linejoin="round" paint-order="stroke">103</text><text transform="translate(288.6,157.9) scale(0.86,1)" text-anchor="middle" font-family="Liberation Sans" font-weight="bold" font-size="10" fill="#111" stroke="#fff" stroke-width="2.4" stroke-linejoin="round" paint-order="stroke">N/A</text><text transform="translate(296.4,164.0) scale(0.86,1)" text-anchor="middle" font-family="Liberation Sans" font-weight="bold" font-size="10" fill="#111" stroke="#fff" stroke-width="2.4" stroke-linejoin="round" paint-order="stroke">210</text><text transform="translate(301.7,172.7) scale(0.86,1)" text-anchor="middle" font-family="Liberation Sans" font-weight="bold" font-size="10" fill="#111" stroke="#fff" stroke-width="2.4" stroke-linejoin="round" paint-order="stroke">175</text><text transform="translate(279.9,180.5) scale(0.86,1)" text-anchor="middle" font-family="Liberation Sans" font-weight="bold" font-size="10" fill="#111" stroke="#fff" stroke-width="2.4" stroke-linejoin="round" paint-order="stroke">163</text><text transform="translate(318.2,173.6) scale(0.86,1)" text-anchor="middle" font-family="Liberation Sans" font-weight="bold" font-size="10" fill="#111" stroke="#fff" stroke-width="2.4" stroke-linejoin="round" paint-order="stroke">162</text><text transform="translate(332.1,184.0) scale(0.86,1)" text-anchor="middle" font-family="Liberation Sans" font-weight="bold" font-size="10" fill="#111" stroke="#fff" stroke-width="2.4" stroke-linejoin="round" paint-order="stroke">11</text><text transform="translate(323.4,185.8) scale(0.86,1)" text-anchor="middle" font-family="Liberation Sans" font-weight="bold" font-size="10" fill="#111" stroke="#fff" stroke-width="2.4" stroke-linejoin="round" paint-order="stroke">181</text><text transform="translate(307.7,220.5) scale(0.86,1)" text-anchor="middle" font-family="Liberation Sans" font-weight="bold" font-size="10" fill="#111" stroke="#fff" stroke-width="2.4" stroke-linejoin="round" paint-order="stroke">75</text><text transform="translate(308.6,207.5) scale(0.86,1)" text-anchor="middle" font-family="Liberation Sans" font-weight="bold" font-size="10" fill="#111" stroke="#fff" stroke-width="2.4" stroke-linejoin="round" paint-order="stroke">92</text><text transform="translate(291.2,194.5) scale(0.86,1)" text-anchor="middle" font-family="Liberation Sans" font-weight="bold" font-size="10" fill="#111" stroke="#fff" stroke-width="2.4" stroke-linejoin="round" paint-order="stroke">155</text><text transform="translate(305.1,197.1) scale(0.86,1)" text-anchor="middle" font-family="Liberation Sans" font-weight="bold" font-size="10" fill="#111" stroke="#fff" stroke-width="2.4" stroke-linejoin="round" paint-order="stroke">173</text><text transform="translate(365.0,120.3) scale(0.86,1)" text-anchor="middle" font-family="Liberation Sans" font-weight="bold" font-size="10" fill="#111" stroke="#fff" stroke-width="2.4" stroke-linejoin="round" paint-order="stroke">81</text><text transform="translate(385.5,142.6) scale(0.86,1)" text-anchor="middle" font-family="Liberation Sans" font-weight="bold" font-size="10" fill="#111" stroke="#fff" stroke-width="2.4" stroke-linejoin="round" paint-order="stroke">192</text><text transform="translate(400.7,137.9) scale(0.86,1)" text-anchor="middle" font-family="Liberation Sans" font-weight="bold" font-size="10" fill="#111" stroke="#fff" stroke-width="2.4" stroke-linejoin="round" paint-order="stroke">175</text><text transform="translate(396.7,166.1) scale(0.86,1)" text-anchor="middle" font-family="Liberation Sans" font-weight="bold" font-size="10" fill="#111" stroke="#fff" stroke-width="2.4" stroke-linejoin="round" paint-order="stroke">155</text><text transform="translate(379.1,184.9) scale(0.86,1)" text-anchor="middle" font-family="Liberation Sans" font-weight="bold" font-size="10" fill="#111" stroke="#fff" stroke-width="2.4" stroke-linejoin="round" paint-order="stroke">N/A</text><text transform="translate(362.7,189.6) scale(0.86,1)" text-anchor="middle" font-family="Liberation Sans" font-weight="bold" font-size="10" fill="#111" stroke="#fff" stroke-width="2.4" stroke-linejoin="round" paint-order="stroke">N/A</text><text transform="translate(341.6,198.9) scale(0.86,1)" text-anchor="middle" font-family="Liberation Sans" font-weight="bold" font-size="10" fill="#111" stroke="#fff" stroke-width="2.4" stroke-linejoin="round" paint-order="stroke">81</text><text transform="translate(355.7,196.6) scale(0.86,1)" text-anchor="middle" font-family="Liberation Sans" font-weight="bold" font-size="10" fill="#111" stroke="#fff" stroke-width="2.4" stroke-linejoin="round" paint-order="stroke">66</text><text transform="translate(363.9,213.0) scale(0.86,1)" text-anchor="middle" font-family="Liberation Sans" font-weight="bold" font-size="10" fill="#111" stroke="#fff" stroke-width="2.4" stroke-linejoin="round" paint-order="stroke">141</text><text transform="translate(365.0,249.0) scale(0.86,1)" text-anchor="middle" font-family="Liberation Sans" font-weight="bold" font-size="10" fill="#111" stroke="#fff" stroke-width="2.4" stroke-linejoin="round" paint-order="stroke">47</text></svg>
</div>


<!-- popup -->
<div class="a" style="left:284px;top:57px;width:119px;height:103px;background:#fff;border-radius:8px;box-shadow:0 1px 4px rgba(0,0,0,0.2)"></div>
<svg class="a" style="left:300px;top:155px" width="40" height="16" viewBox="0 0 40 16"><path d="M8.5 4.5 L31.5 4.5 L20 13 Z" fill="#fff"/></svg>
<div class="t c" style="left:343.5px;top:68.7px;font-size:10.4px;color:#333">Bishkek</div>
<div class="t c" style="left:343.5px;top:80.4px;font-size:10.4px;color:#333">2022-01-24 6:00 PM</div>
<div class="t c" style="left:343.5px;top:91.8px;font-size:10.4px;color:#333">(LT)</div>
<div class="a" style="left:295px;top:103px;width:97px;height:46px;border:1px solid #0d3f73;background:#fff"></div>
<div class="a" style="left:296px;top:104px;width:95px;height:20.5px;background:#044a87"></div>
<div class="a" style="left:356.5px;top:124.5px;width:34.5px;height:23.5px;background:#fe0000"></div>
<div class="t b c" style="left:326px;top:109.7px;font-size:10.4px;color:#fff">Pollutant</div>
<div class="t b c" style="left:374px;top:109.7px;font-size:10.4px;color:#fff">AQI</div>
<div class="t c" style="left:326px;top:131.9px;font-size:10.4px;color:#333">PM2.5</div>
<div class="t b c" style="left:374px;top:131.9px;font-size:10.4px;color:#fff">152</div>

<!-- right column -->
<div class="a" style="left:570px;top:3px;width:248px;height:27px;background:#044a87"></div>
<div class="t b" style="left:574px;top:11.6px;font-size:10px;color:#fff">Select a City</div>
<div class="a" style="left:570px;top:31px;width:249px;height:26.5px;background:#fff;border:1px solid #cfcfcf;border-radius:4px"></div>
<div class="t" style="left:577.6px;top:39.6px;font-size:10.4px;color:#333">Bishkek</div>
<svg class="a" style="left:788px;top:39px" width="9" height="9" viewBox="0 0 9 9"><path d="M1.5 1.2L7.7 7.8M7.7 1.2L1.5 7.8" stroke="#888" stroke-width="1.1"/></svg>
<div class="a" style="left:803px;top:42px;width:0;height:0;border-left:3.5px solid transparent;border-right:3.5px solid transparent;border-top:3.5px solid #999"></div>

<div class="a" style="left:570px;top:74px;width:248px;height:27px;background:#044a87"></div>
<div class="t b" style="left:574px;top:82.4px;font-size:10px;color:#fff">Select a Parameter</div>
<div class="a" style="left:570px;top:102.5px;width:249px;height:26.5px;background:#fff;border:1px solid #cfcfcf;border-radius:4px"></div>
<div class="t" style="left:577.7px;top:110.8px;font-size:10.4px;color:#333">PM2.5</div>
<svg class="a" style="left:788px;top:110px" width="9" height="9" viewBox="0 0 9 9"><path d="M1.5 1.2L7.7 7.8M7.7 1.2L1.5 7.8" stroke="#888" stroke-width="1.1"/></svg>
<div class="a" style="left:803px;top:113px;width:0;height:0;border-left:3.5px solid transparent;border-right:3.5px solid transparent;border-top:3.5px solid #999"></div>

<div class="a" style="left:569px;top:144px;width:250px;height:54.5px;background:#fff;border:1px solid #c8c8c8"></div>
<div class="t b" style="left:578px;top:154px;font-size:10.4px;color:#444">Bishkek</div>
<svg class="a" style="left:784px;top:164px" width="26" height="26" viewBox="0 0 26 26">
<rect width="26" height="26" fill="#f1b136"/>
<circle cx="5.6" cy="20.3" r="2.6" fill="#fff"/>
<path d="M3.2 11.7 H5.5 A8.7 8.7 0 0 1 14.2 20.4 V22.1" stroke="#fff" stroke-width="3.5" fill="none"/>
<path d="M3.2 5.1 H5.5 A15.2 15.2 0 0 1 20.7 20.3 V22.1" stroke="#fff" stroke-width="3.5" fill="none"/>
</svg>
<div class="t" style="left:569px;top:210.6px;font-size:8.3px;color:#5e5e5e">Note: Values above 500 are considered Beyond the AQI. Follow</div>
<div class="t" style="left:569px;top:225.5px;font-size:8.3px;color:#5e5e5e">recommendations for the Hazardous category. Additional</div>
<div class="t" style="left:569px;top:240.3px;font-size:8.3px;color:#5e5e5e">information on reducing exposure to extremely high levels of particle</div>
<div class="t" style="left:569px;top:255.2px;font-size:8.3px;color:#5e5e5e">pollution is available <b style="color:#1d3b5e;text-decoration:underline">here</b>.</div>

<!-- tabs -->
<div class="a" style="left:24px;top:355px;width:81px;height:22px;background:#fff;border:1px solid #999;border-top:2px solid #0b3a66;border-bottom:none;border-radius:4px 4px 0 0"></div>
<div class="a" style="left:107px;top:355px;width:125px;height:22px;background:#d2d2d2;border-radius:4px 4px 0 0"></div>
<div class="a" style="left:234px;top:355px;width:104px;height:22px;background:#d2d2d2;border-radius:4px 4px 0 0"></div>
<div class="a" style="left:24px;top:377px;width:795px;height:1px;background:#a8a8a8"></div>
<div class="t c" style="left:64.5px;top:363.7px;font-size:10.4px;color:#333">AQI</div>
<div class="t c" style="left:169.5px;top:363.7px;font-size:10.4px;color:#666">Concentration</div>
<div class="t c" style="left:286px;top:363.7px;font-size:10.4px;color:#666">Historical</div>

<div class="t" style="left:24px;top:388.3px;font-size:10.5px;color:#333">Learn more about how the Air Quality Index [AQI] is calculated from the EPA <span style="color:#1f3f66;text-decoration:underline">here</span>.</div>

<!-- chart -->
<div class="a" style="left:24px;top:416px;width:596px;height:245px;background:#fff"></div>
<svg class="a" style="left:0;top:0" width="837" height="661" viewBox="0 0 837 661"><rect x="80" y="572.43" width="533" height="1" fill="#e0e0e0"/><rect x="80" y="544.86" width="533" height="1" fill="#e0e0e0"/><rect x="80" y="517.29" width="533" height="1" fill="#e0e0e0"/><rect x="80" y="489.72" width="533" height="1" fill="#e0e0e0"/><rect x="80" y="462.15" width="533" height="1" fill="#e0e0e0"/><rect x="80" y="600.00" width="533" height="1" fill="#ccd6eb"/><rect x="80.00" y="600.50" width="1" height="7" fill="#ccd6eb"/><rect x="102.15" y="600.50" width="1" height="7" fill="#ccd6eb"/><rect x="124.30" y="600.50" width="1" height="7" fill="#ccd6eb"/><rect x="146.45" y="600.50" width="1" height="7" fill="#ccd6eb"/><rect x="168.60" y="600.50" width="1" height="7" fill="#ccd6eb"/><rect x="190.75" y="600.50" width="1" height="7" fill="#ccd6eb"/><rect x="212.90" y="600.50" width="1" height="7" fill="#ccd6eb"/><rect x="235.05" y="600.50" width="1" height="7" fill="#ccd6eb"/><rect x="257.20" y="600.50" width="1" height="7" fill="#ccd6eb"/><rect x="279.35" y="600.50" width="1" height="7" fill="#ccd6eb"/><rect x="301.50" y="600.50" width="1" height="7" fill="#ccd6eb"/><rect x="323.65" y="600.50" width="1" height="7" fill="#ccd6eb"/><rect x="345.80" y="600.50" width="1" height="7" fill="#ccd6eb"/><rect x="367.95" y="600.50" width="1" height="7" fill="#ccd6eb"/><rect x="390.10" y="600.50" width="1" height="7" fill="#ccd6eb"/><rect x="412.25" y="600.50" width="1" height="7" fill="#ccd6eb"/><rect x="434.40" y="600.50" width="1" height="7" fill="#ccd6eb"/><rect x="456.55" y="600.50" width="1" height="7" fill="#ccd6eb"/><rect x="478.70" y="600.50" width="1" height="7" fill="#ccd6eb"/><rect x="500.85" y="600.50" width="1" height="7" fill="#ccd6eb"/><rect x="523.00" y="600.50" width="1" height="7" fill="#ccd6eb"/><rect x="545.15" y="600.50" width="1" height="7" fill="#ccd6eb"/><rect x="567.30" y="600.50" width="1" height="7" fill="#ccd6eb"/><rect x="589.45" y="600.50" width="1" height="7" fill="#ccd6eb"/><rect x="611.60" y="600.50" width="1" height="7" fill="#ccd6eb"/><rect x="86.28" y="571.55" width="11" height="28.95" fill="#ff7e00" stroke="#7a3c00" stroke-width="1"/><rect x="108.42" y="572.10" width="11" height="28.40" fill="#ff7e00" stroke="#7a3c00" stroke-width="1"/><rect x="130.57" y="572.65" width="11" height="27.85" fill="#ff7e00" stroke="#7a3c00" stroke-width="1"/><rect x="152.72" y="573.48" width="11" height="27.02" fill="#ffff00" stroke="#5a5a00" stroke-width="1"/><rect x="174.88" y="573.48" width="11" height="27.02" fill="#ffff00" stroke="#5a5a00" stroke-width="1"/><rect x="197.02" y="573.48" width="11" height="27.02" fill="#ffff00" stroke="#5a5a00" stroke-width="1"/><rect x="219.17" y="573.48" width="11" height="27.02" fill="#ffff00" stroke="#5a5a00" stroke-width="1"/><rect x="241.32" y="573.48" width="11" height="27.02" fill="#ffff00" stroke="#5a5a00" stroke-width="1"/><rect x="263.47" y="575.69" width="11" height="24.81" fill="#ffff00" stroke="#5a5a00" stroke-width="1"/><rect x="285.62" y="575.69" width="11" height="24.81" fill="#ffff00" stroke="#5a5a00" stroke-width="1"/><rect x="307.77" y="575.69" width="11" height="24.81" fill="#ffff00" stroke="#5a5a00" stroke-width="1"/><rect x="329.92" y="574.58" width="11" height="25.92" fill="#ffff00" stroke="#5a5a00" stroke-width="1"/><rect x="352.07" y="574.03" width="11" height="26.47" fill="#ffff00" stroke="#5a5a00" stroke-width="1"/><rect x="374.22" y="575.69" width="11" height="24.81" fill="#ffff00" stroke="#5a5a00" stroke-width="1"/><rect x="396.37" y="567.97" width="11" height="32.53" fill="#ff7e00" stroke="#7a3c00" stroke-width="1"/><rect x="418.52" y="556.94" width="11" height="43.56" fill="#ff0000" stroke="#600000" stroke-width="1"/><rect x="440.67" y="557.77" width="11" height="42.73" fill="#ff0000" stroke="#600000" stroke-width="1"/><rect x="462.82" y="563.00" width="11" height="37.50" fill="#ff7e00" stroke="#7a3c00" stroke-width="1"/><rect x="484.97" y="569.07" width="11" height="31.43" fill="#ff7e00" stroke="#7a3c00" stroke-width="1"/><rect x="507.12" y="572.10" width="11" height="28.40" fill="#ff7e00" stroke="#7a3c00" stroke-width="1"/><rect x="529.28" y="570.17" width="11" height="30.33" fill="#ff7e00" stroke="#7a3c00" stroke-width="1"/><rect x="551.43" y="564.93" width="11" height="35.57" fill="#ff7e00" stroke="#7a3c00" stroke-width="1"/><rect x="573.58" y="562.18" width="11" height="38.32" fill="#ff7e00" stroke="#7a3c00" stroke-width="1"/><rect x="595.73" y="558.59" width="11" height="41.91" fill="#ff0000" stroke="#600000" stroke-width="1"/><text x="68.6" y="603.00" text-anchor="end" font-family="Liberation Sans" font-size="8.8" fill="#1a1a1a">0</text><text x="68.6" y="575.43" text-anchor="end" font-family="Liberation Sans" font-size="8.8" fill="#1a1a1a">100</text><text x="68.6" y="547.86" text-anchor="end" font-family="Liberation Sans" font-size="8.8" fill="#1a1a1a">200</text><text x="68.6" y="520.29" text-anchor="end" font-family="Liberation Sans" font-size="8.8" fill="#1a1a1a">300</text><text x="68.6" y="492.72" text-anchor="end" font-family="Liberation Sans" font-size="8.8" fill="#1a1a1a">400</text><text x="68.6" y="465.15" text-anchor="end" font-family="Liberation Sans" font-size="8.8" fill="#1a1a1a">500</text><text x="0" y="0" transform="translate(45,528) rotate(-90)" text-anchor="middle" font-family="Liberation Sans" font-size="9.5" fill="#1a1a1a">AQI</text><text x="0" y="0" transform="translate(93.78,612.50) rotate(-45)" text-anchor="end" font-family="Liberation Sans" font-size="9" fill="#666">7 PM</text><text x="0" y="0" transform="translate(115.92,612.50) rotate(-45)" text-anchor="end" font-family="Liberation Sans" font-size="9" fill="#666">8 PM</text><text x="0" y="0" transform="translate(138.07,612.50) rotate(-45)" text-anchor="end" font-family="Liberation Sans" font-size="9" fill="#666">9 PM</text><text x="0" y="0" transform="translate(160.22,612.50) rotate(-45)" text-anchor="end" font-family="Liberation Sans" font-size="9" fill="#666">10 PM</text><text x="0" y="0" transform="translate(182.38,612.50) rotate(-45)" text-anchor="end" font-family="Liberation Sans" font-size="9" fill="#666">11 PM</text><text x="0" y="0" transform="translate(204.52,612.50) rotate(-45)" text-anchor="end" font-family="Liberation Sans" font-size="9" fill="#666">Jan 24, 2022 12 AM</text><text x="0" y="0" transform="translate(226.67,612.50) rotate(-45)" text-anchor="end" font-family="Liberation Sans" font-size="9" fill="#666">1 AM</text><text x="0" y="0" transform="translate(248.82,612.50) rotate(-45)" text-anchor="end" font-family="Liberation Sans" font-size="9" fill="#666">2 AM</text><text x="0" y="0" transform="translate(270.97,612.50) rotate(-45)" text-anchor="end" font-family="Liberation Sans" font-size="9" fill="#666">3 AM</text><text x="0" y="0" transform="translate(293.12,612.50) rotate(-45)" text-anchor="end" font-family="Liberation Sans" font-size="9" fill="#666">4 AM</text><text x="0" y="0" transform="translate(315.27,612.50) rotate(-45)" text-anchor="end" font-family="Liberation Sans" font-size="9" fill="#666">5 AM</text><text x="0" y="0" transform="translate(337.42,612.50) rotate(-45)" text-anchor="end" font-family="Liberation Sans" font-size="9" fill="#666">6 AM</text><text x="0" y="0" transform="translate(359.57,612.50) rotate(-45)" text-anchor="end" font-family="Liberation Sans" font-size="9" fill="#666">7 AM</text><text x="0" y="0" transform="translate(381.72,612.50) rotate(-45)" text-anchor="end" font-family="Liberation Sans" font-size="9" fill="#666">8 AM</text><text x="0" y="0" transform="translate(403.87,612.50) rotate(-45)" text-anchor="end" font-family="Liberation Sans" font-size="9" fill="#666">9 AM</text><text x="0" y="0" transform="translate(426.02,612.50) rotate(-45)" text-anchor="end" font-family="Liberation Sans" font-size="9" fill="#666">10 AM</text><text x="0" y="0" transform="translate(448.17,612.50) rotate(-45)" text-anchor="end" font-family="Liberation Sans" font-size="9" fill="#666">11 AM</text><text x="0" y="0" transform="translate(470.32,612.50) rotate(-45)" text-anchor="end" font-family="Liberation Sans" font-size="9" fill="#666">12 PM</text><text x="0" y="0" transform="translate(492.47,612.50) rotate(-45)" text-anchor="end" font-family="Liberation Sans" font-size="9" fill="#666">1 PM</text><text x="0" y="0" transform="translate(514.62,612.50) rotate(-45)" text-anchor="end" font-family="Liberation Sans" font-size="9" fill="#666">2 PM</text><text x="0" y="0" transform="translate(536.78,612.50) rotate(-45)" text-anchor="end" font-family="Liberation Sans" font-size="9" fill="#666">3 PM</text><text x="0" y="0" transform="translate(558.93,612.50) rotate(-45)" text-anchor="end" font-family="Liberation Sans" font-size="9" fill="#666">4 PM</text><text x="0" y="0" transform="translate(581.08,612.50) rotate(-45)" text-anchor="end" font-family="Liberation Sans" font-size="9" fill="#666">5 PM</text><text x="0" y="0" transform="translate(603.23,612.50) rotate(-45)" text-anchor="end" font-family="Liberation Sans" font-size="9" fill="#666">6 PM</text><text x="322" y="433.8" text-anchor="middle" font-family="Liberation Sans" font-size="14" fill="#333">Bishkek – PM2.5</text></svg>

<!-- current conditions -->
<div class="a" style="left:631px;top:416px;width:188px;height:240px;border:1px solid #0d3f73;background:#f0f0f0"></div>
<div class="a" style="left:632px;top:417px;width:186px;height:55.5px;background:#044a87"></div>
<div class="a" style="left:632px;top:472.5px;width:186px;height:87.5px;background:#fe0000"></div>
<div class="t b c" style="left:725px;top:422.3px;font-size:11.2px;color:#fff">Current Conditions</div>
<div class="t b c" style="left:725px;top:440.6px;font-size:9.1px;color:#fff">observed at</div>
<div class="t b c" style="left:725px;top:454.3px;font-size:11.26px;color:#fff">Jan 24, 2022 6:00 PM (LT)</div>
<div class="t b c" style="left:725px;top:487.1px;font-size:14.8px;color:#fff">152 AQI</div>
<div class="t b c" style="left:725px;top:509.4px;font-size:14.8px;color:#fff">Unhealthy</div>
<div class="t b c" style="left:725px;top:530.2px;font-size:14.8px;color:#fff">PM2.5</div>
<div class="t b c" style="left:725px;top:569px;font-size:8.9px;color:#333">Health Message</div>
<div class="t" style="left:636.2px;top:589px;font-size:9px;color:#333">Everyone may begin to experience health</div>
<div class="t" style="left:636.2px;top:605px;font-size:9px;color:#333">effects when AQI values are between 151</div>
<div class="t" style="left:636.2px;top:621.3px;font-size:9px;color:#333">and 200. Members of sensitive groups may</div>
<div class="t" style="left:636.2px;top:636.8px;font-size:9px;color:#333">experience more serious health effects.</div>
</body></html>
